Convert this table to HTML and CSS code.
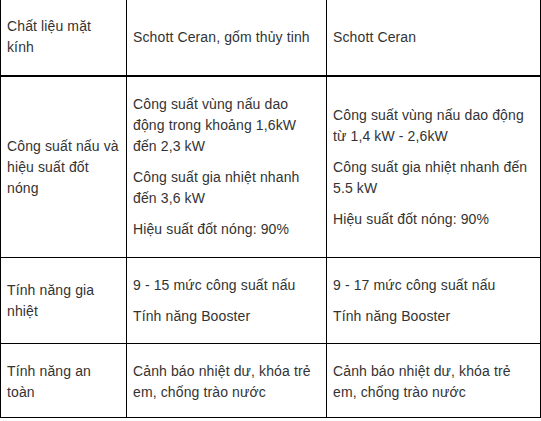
FILE: index.html
```html
<!DOCTYPE html>
<html>
<head>
<meta charset="utf-8">
<link rel="stylesheet" href="styles.css">
</head>
<body>
<table class="spec">
  <colgroup>
    <col class="c1">
    <col class="c2">
    <col class="c3">
  </colgroup>
  <tr class="first">
    <td><p>Chất liệu mặt kính</p></td>
    <td><p>Schott Ceran, gốm thủy tinh</p></td>
    <td><p>Schott Ceran</p></td>
  </tr>
  <tr>
    <td><p>Công suất nấu và hiệu suất đốt nóng</p></td>
    <td>
      <p>Công suất vùng nấu dao động trong khoảng 1,6kW đến 2,3 kW</p>
      <p>Công suất gia nhiệt nhanh đến 3,6 kW</p>
      <p>Hiệu suất đốt nóng: 90%</p>
    </td>
    <td>
      <p>Công suất vùng nấu dao động từ 1,4 kW - 2,6kW</p>
      <p>Công suất gia nhiệt nhanh đến 5.5 kW</p>
      <p>Hiệu suất đốt nóng: 90%</p>
    </td>
  </tr>
  <tr class="mid">
    <td><p>Tính năng gia nhiệt</p></td>
    <td>
      <p>9 - 15 mức công suất nấu</p>
      <p>Tính năng Booster</p>
    </td>
    <td>
      <p>9 - 17 mức công suất nấu</p>
      <p>Tính năng Booster</p>
    </td>
  </tr>
  <tr class="last">
    <td><p>Tính năng an toàn</p></td>
    <td><p>Cảnh báo nhiệt dư, khóa trẻ em, chống trào nước</p></td>
    <td><p>Cảnh báo nhiệt dư, khóa trẻ em, chống trào nước</p></td>
  </tr>
</table>
</body>
</html>
```

FILE: styles.css
```css
html, body {
  margin: 0;
  padding: 0;
  background: #fff;
}

body {
  font-family: "Liberation Sans", Arial, sans-serif;
  font-size: 14px;
  letter-spacing: 0.12px;
  line-height: 21px;
  color: #333;
}

.spec {
  border-collapse: collapse;
  table-layout: fixed;
  width: 540px;
  margin-top: -2px;
}

.c1 { width: 126px; }
.c2 { width: 200px; }
.c3 { width: 214px; }

.spec td {
  border: 1px solid #000;
  padding: 7px 6px;
  vertical-align: middle;
}

.spec tr.first td {
  border-bottom-width: 2px;
}

.spec tr.mid td {
  padding-bottom: 6px;
}

.spec tr.last td {
  padding-bottom: 4px;
}

.spec p {
  margin: 10px 0;
}
```
